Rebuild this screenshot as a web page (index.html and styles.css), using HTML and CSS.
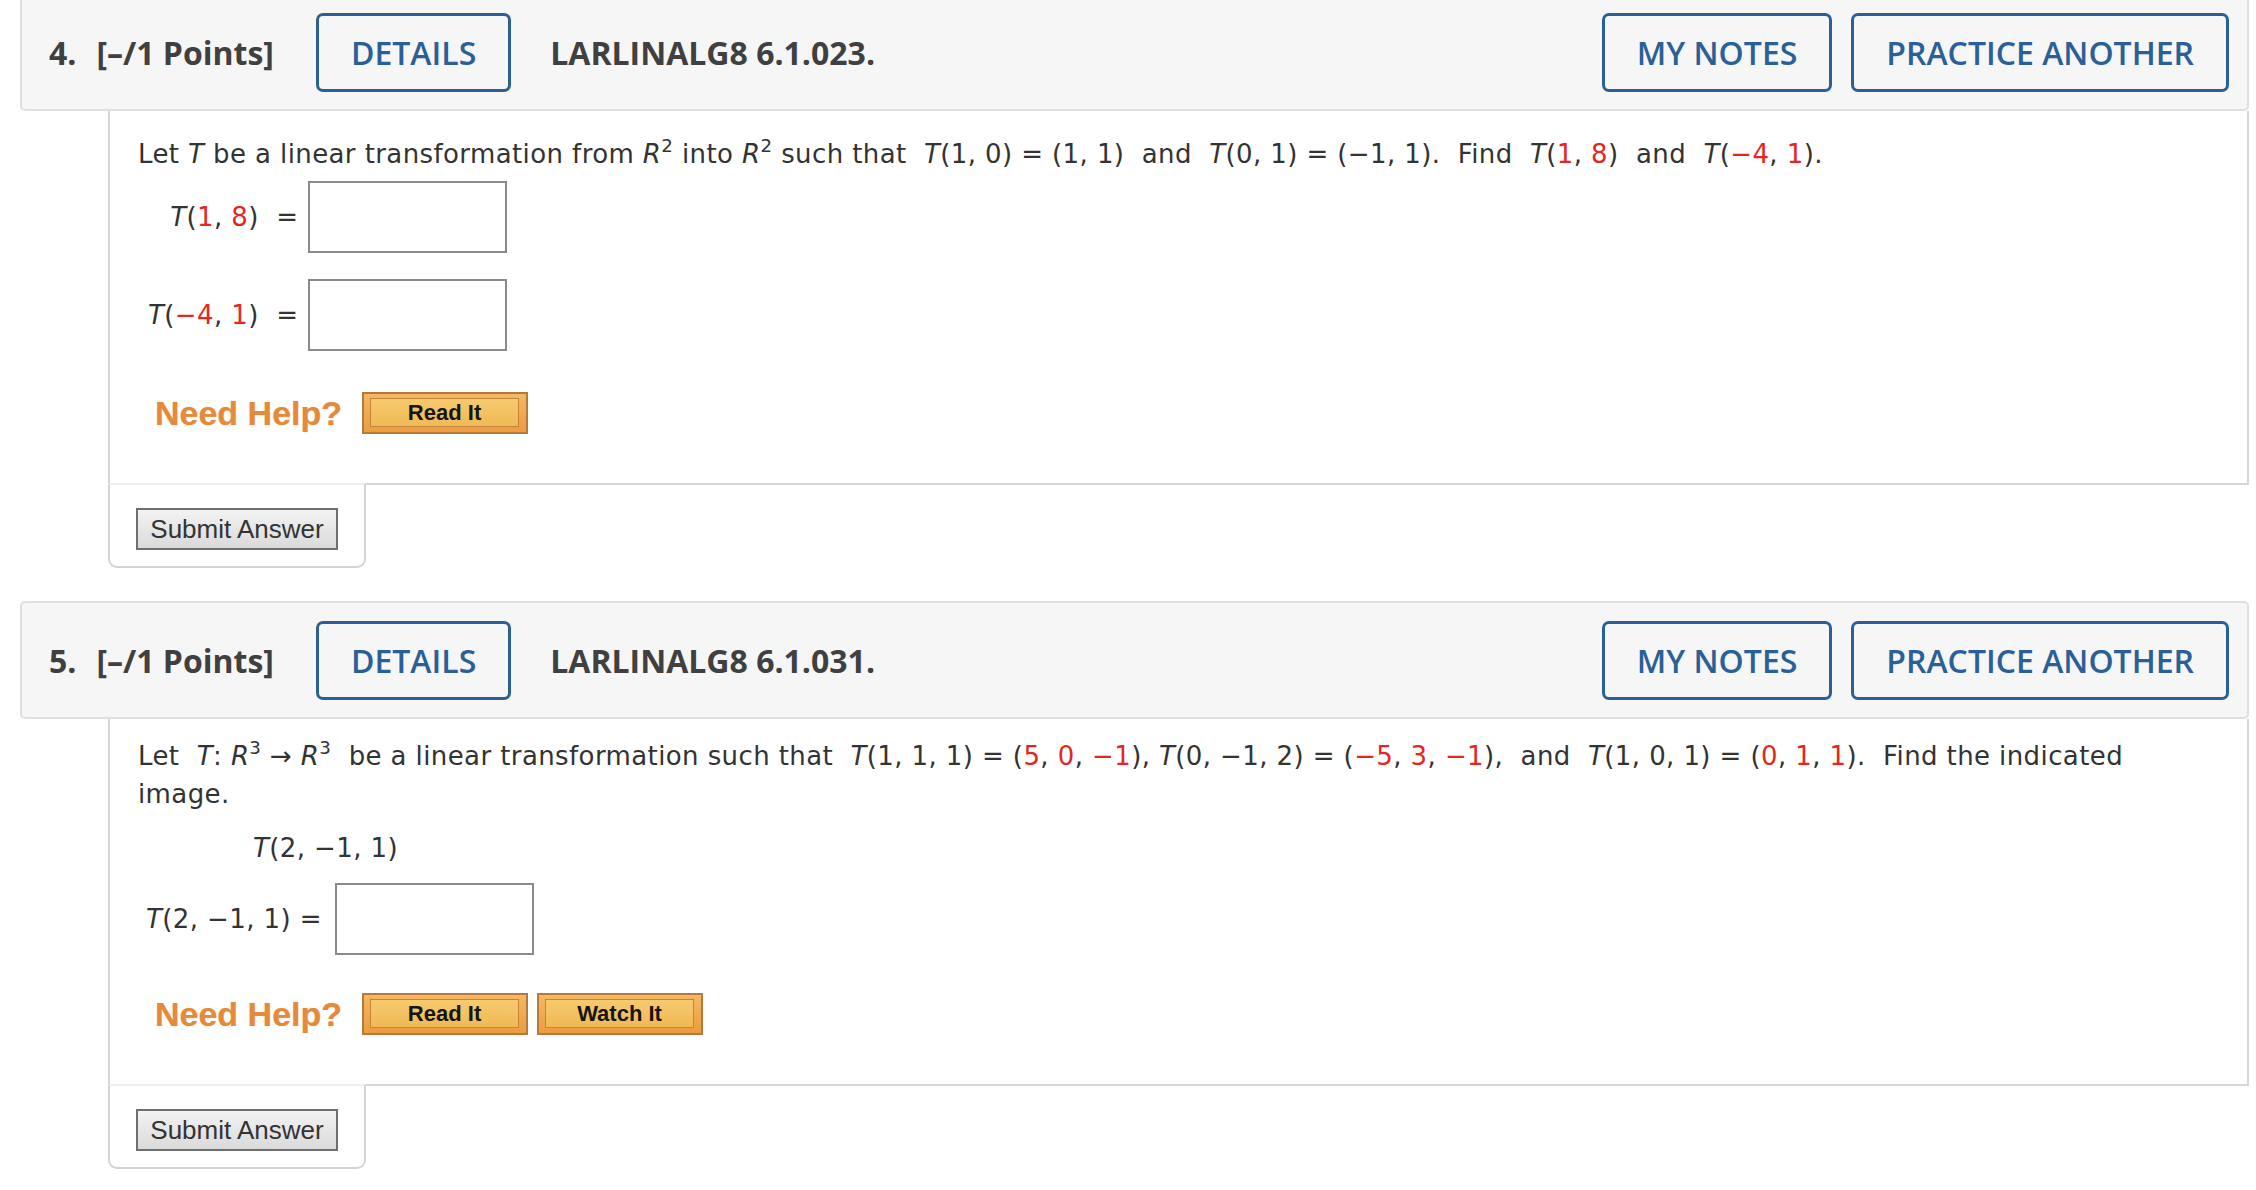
FILE: index.html
```html
<!DOCTYPE html>
<html lang="en">
<head>
<meta charset="utf-8">
<title>Questions</title>
<link rel="stylesheet" href="styles.css">
</head>
<body>
<div class="page">

  <section class="question">
    <div class="qhead">
      <span class="qnum">4.</span>
      <span class="pts">[–/1 Points]</span>
      <button class="hbtn details">DETAILS</button>
      <span class="qid">LARLINALG8 6.1.023.</span>
      <button class="hbtn notes">MY NOTES</button>
      <button class="hbtn practice">PRACTICE ANOTHER</button>
    </div>
    <div class="qbody q4">
      <p class="prompt">Let <i>T</i> be a linear transformation from <i>R</i><sup>2</sup> into <i>R</i><sup>2</sup> such that&nbsp; <i>T</i>(1, 0) = (1, 1)&nbsp; and&nbsp; <i>T</i>(0, 1) = (−1, 1).&nbsp; Find&nbsp; <i>T</i>(<span class="r">1</span>, <span class="r">8</span>)&nbsp; and&nbsp; <i>T</i>(<span class="r">−4</span>, <span class="r">1</span>).</p>
      <div class="answers">
        <span class="lbl"><i>T</i>(<span class="r">1</span>, <span class="r">8</span>)&nbsp; =</span>
        <span class="box"></span>
        <span class="lbl"><i>T</i>(<span class="r">−4</span>, <span class="r">1</span>)&nbsp; =</span>
        <span class="box"></span>
      </div>
      <div class="help">
        <span class="needhelp">Need Help?</span>
        <button class="hb"><span>Read It</span></button>
      </div>
    </div>
    <div class="tab"><button class="submit">Submit Answer</button></div>
  </section>

  <section class="question">
    <div class="qhead">
      <span class="qnum">5.</span>
      <span class="pts">[–/1 Points]</span>
      <button class="hbtn details">DETAILS</button>
      <span class="qid">LARLINALG8 6.1.031.</span>
      <button class="hbtn notes">MY NOTES</button>
      <button class="hbtn practice">PRACTICE ANOTHER</button>
    </div>
    <div class="qbody q5">
      <p class="prompt"><span>Let&nbsp; <i>T</i>: <i>R</i><sup>3</sup> → <i>R</i><sup>3</sup>&nbsp; be a linear transformation such that&nbsp; <i>T</i>(1, 1, 1) = (<span class="r">5</span>, <span class="r">0</span>, <span class="r">−1</span>), <i>T</i>(0, −1, 2) = (<span class="r">−5</span>, <span class="r">3</span>, <span class="r">−1</span>),&nbsp; and&nbsp; <i>T</i>(1, 0, 1) = (<span class="r">0</span>, <span class="r">1</span>, <span class="r">1</span>).&nbsp; Find the indicated</span> <span>image.</span></p>
      <p class="expr"><i>T</i>(2, −1, 1)</p>
      <div class="row">
        <span class="lbl"><i>T</i>(2, −1, 1) =</span>
        <span class="box"></span>
      </div>
      <div class="help">
        <span class="needhelp">Need Help?</span>
        <button class="hb"><span>Read It</span></button>
        <button class="hb watch"><span>Watch It</span></button>
      </div>
    </div>
    <div class="tab"><button class="submit">Submit Answer</button></div>
  </section>

</div>
</body>
</html>
```

FILE: styles.css
```css
* { box-sizing: border-box; }

body {
  margin: 0;
  background: #ffffff;
  font-family: "DejaVu Sans", Verdana, sans-serif;
  color: #333333;
}

.page {
  margin: -7px 7px 0 20px;
}

.question {
  margin-bottom: 33px;
}

/* ---------- header bar ---------- */
.qhead {
  display: flex;
  align-items: center;
  height: 118px;
  padding: 0 18px 0 27px;
  background: #f6f6f6;
  border: 2px solid #dfdfdf;
  border-radius: 5px;
  font-family: "Open Sans", "Liberation Sans", sans-serif;
  color: #404040;
}

.qnum,
.pts,
.qid {
  font-size: 32px;
  font-weight: 700;
  white-space: nowrap;
}

.qnum { margin-right: 20px; }

.hbtn {
  height: 79px;
  padding: 0 32px;
  border: 3px solid #2b6096;
  border-radius: 7px;
  background: transparent;
  color: #2b6096;
  font-family: "Open Sans", "Liberation Sans", sans-serif;
  font-size: 32px;
  font-weight: 600;
  white-space: nowrap;
  cursor: pointer;
}

.details { margin-left: 42px; }
.qid { margin-left: 39px; }
.notes { margin-left: auto; }
.practice { margin-left: 19px; }

/* ---------- question body ---------- */
.qbody {
  margin-left: 88px;
  border: 2px solid #d6d6d6;
  border-top: 0;
  padding: 24px 60px 49px 28px;
  font-size: 26px;
  line-height: 38px;
  letter-spacing: 0.4px;
}

.q5 { padding-top: 18px; }

.qbody p { margin: 0; }

.qbody i { font-style: italic; }

.qbody sup {
  font-size: 0.7em;
  line-height: 0;
  vertical-align: 0.6em;
}

.r { color: #e5261f; }

.answers {
  display: grid;
  grid-template-columns: max-content max-content;
  column-gap: 10px;
  row-gap: 26px;
  align-items: center;
  margin: 8px 0 0 10px;
}

.answers .lbl { justify-self: end; }

.box {
  display: block;
  width: 199px;
  height: 72px;
  border: 2px solid #8a8a8a;
  background: #ffffff;
}

.qbody .expr {
  margin: 16px 0 0 115px;
}

.row {
  display: flex;
  align-items: center;
  margin: 16px 0 0 8px;
}

.row .box { margin-left: 13px; }

/* ---------- help row ---------- */
.help {
  display: flex;
  align-items: center;
  margin: 41px 0 0 17px;
  letter-spacing: 0;
}

.q5 .help { margin-top: 38px; }

.needhelp {
  font-family: "Liberation Sans", Arial, sans-serif;
  font-weight: 700;
  font-size: 34px;
  line-height: 42px;
  color: #e5893a;
  text-shadow: 0 0 1px rgba(229, 137, 58, 0.5);
  margin-right: 20px;
}

.hb {
  width: 166px;
  height: 42px;
  padding: 4px 7px 5px 6px;
  border: 2px solid #b5793b;
  background: linear-gradient(#f5b863, #ec9c40);
  cursor: pointer;
}

.hb span {
  display: flex;
  align-items: center;
  justify-content: center;
  height: 100%;
  border: 1px solid #c4853d;
  background: linear-gradient(#f6ca6e, #f0b955);
  font-family: "Liberation Sans", Arial, sans-serif;
  font-weight: 700;
  font-size: 22px;
  color: #151515;
}

.watch { margin-left: 9px; }

/* ---------- submit tab ---------- */
.tab {
  width: 258px;
  margin: -2px 0 0 88px;
  padding: 23px 26px 16px;
  border: 2px solid #d3d3d3;
  border-top-color: #efefef;
  border-radius: 0 0 9px 9px;
  background: #ffffff;
}

.submit {
  display: block;
  width: 202px;
  height: 42px;
  padding: 0;
  border: 2px solid #6f6f6f;
  background: linear-gradient(#f3f3f3, #dadada);
  font-family: "Liberation Sans", Arial, sans-serif;
  font-size: 26px;
  color: #333333;
  cursor: pointer;
}
```
